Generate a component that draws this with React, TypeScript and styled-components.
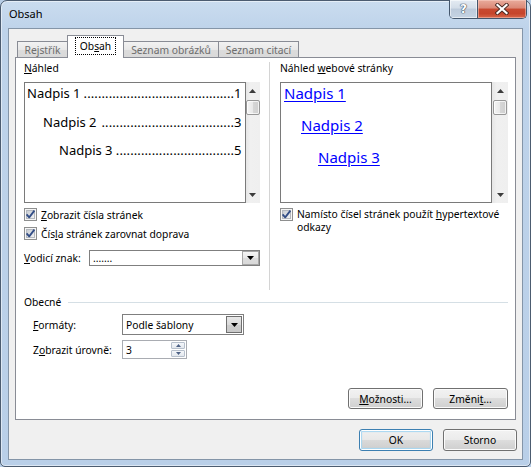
import React from "react";
import styled, { createGlobalStyle, css } from "styled-components";

const UI = `"Segoe UI", "Noto Sans", "Open Sans", sans-serif`;

const GlobalStyle = createGlobalStyle`
  html, body { margin: 0; padding: 0; }
  body {
    width: 531px; height: 467px; overflow: hidden;
    background: #b7cde6;
    font-family: ${UI};
    font-size: 10.3px;
    color: #000;
  }
  * { box-sizing: border-box; }
`;

const Window = styled.div`
  width: 531px;
  height: 467px;
  border: 1px solid #4c5c70;
  border-radius: 7px 7px 5px 5px;
  background: linear-gradient(180deg, #cadcef 0px, #bed3ea 28px, #b9cfe8 100%);
  box-shadow: inset 0 0 0 1px rgba(255, 255, 255, 0.5);
  padding: 0 7px 6px 7px;
  display: flex;
  flex-direction: column;
`;

const TitleBar = styled.div`
  height: 27px;
  display: flex;
  align-items: flex-start;
`;

const Title = styled.div`
  margin: 5px 0 0 1px;
  font-size: 11px;
  line-height: 16px;
  color: #000;
`;

const Caption = styled.div`
  margin: -1px -4px 0 auto;
  display: flex;
  height: 19px;
  border: 1px solid #44566c;
  border-top: none;
  border-radius: 0 0 5px 5px;
  overflow: hidden;
`;

const HelpButton = styled.div`
  width: 28px;
  height: 100%;
  display: flex;
  align-items: center;
  justify-content: center;
  background: linear-gradient(180deg, #e4ebf3 0%, #d3dde8 45%, #bccadb 50%, #c5d3e3 100%);
  box-shadow: inset 0 0 0 1px rgba(255, 255, 255, 0.55);
  border-right: 1px solid #44566c;
  color: #fff;
  font-family: "DejaVu Sans", sans-serif;
  font-weight: bold;
  font-size: 12px;
  text-shadow: 0 0 1px #344455, 0 0 1px #344455, 0 0 1px #344455;
`;

const CloseButton = styled.div`
  width: 48px;
  height: 100%;
  display: flex;
  align-items: center;
  justify-content: center;
  background: linear-gradient(180deg, #e9ab9c 0%, #db8876 45%, #c84a31 50%, #c6452c 75%, #d7664a 100%);
  box-shadow: inset 0 0 0 1px rgba(255, 220, 210, 0.45);
`;

const Client = styled.div`
  flex: 1;
  background: #f0f0f0;
  border: 1px solid #8495a8;
  padding: 6px 6px 0 6px;
  display: flex;
  flex-direction: column;
`;

const TabStrip = styled.div`
  height: 22px;
  display: flex;
  align-items: flex-end;
  padding-left: 2px;
`;

const Tab = styled.div<{ $active?: boolean; $w: number }>`
  width: ${(p) => p.$w}px;
  height: 16px;
  border: 1px solid #898c95;
  border-bottom: none;
  background: linear-gradient(180deg, #f2f2f2 0%, #e8e8e8 50%, #dcdcdc 51%, #d9d9d9 100%);
  color: #6d6d6d;
  font-size: 10.3px;
  display: flex;
  align-items: center;
  justify-content: center;
  & + & {
    margin-left: -1px;
  }
  ${(p) =>
    p.$active &&
    css`
      height: 23px;
      margin-bottom: -1px;
      background: #fff;
      color: #000;
      position: relative;
      z-index: 1;
      padding-bottom: 3px;
    `}
`;

const FocusRect = styled.span`
  outline: 1px dotted #000;
  padding: 1px 4px;
  line-height: 14px;
`;

const Panel = styled.div`
  height: 363px;
  background: #fff;
  border: 1px solid #898c95;
  padding: 3px 7px 10px 8px;
  display: flex;
  flex-direction: column;
`;

const TopSection = styled.div`
  height: 229px;
  display: flex;
`;

const Column = styled.div<{ $w?: number }>`
  display: flex;
  flex-direction: column;
  ${(p) => (p.$w ? `width: ${p.$w}px;` : "flex: 1;")}
`;

const VSep = styled.div`
  width: 1px;
  margin: 1px 10px 0 9px;
  background: #d4d4d4;
`;

const Label = styled.div`
  line-height: 15px;
  height: 15px;
  margin-bottom: 6px;
  white-space: nowrap;
`;

const U = styled.span`
  text-decoration: underline;
  text-underline-offset: 1px;
`;

const PreviewRow = styled.div`
  height: 121px;
  display: flex;
`;

const PreviewBox = styled.div<{ $gap: number }>`
  flex: 1;
  border: 1px solid #7a7a7a;
  background: #fff;
  padding: 0 3px 0 2px;
  display: flex;
  flex-direction: column;
  gap: ${(p) => p.$gap}px;
`;

const TocLine = styled.div<{ $indent: number }>`
  display: flex;
  padding-left: ${(p) => p.$indent}px;
  font-size: 13px;
  line-height: 20px;
  white-space: nowrap;
`;

const TocTitle = styled.span`
  margin-right: 3px;
`;

const Leader = styled.span`
  flex: 1;
  text-align: right;
  letter-spacing: 0.1px;
`;

const WebLink = styled.div<{ $indent: number }>`
  margin-left: ${(p) => p.$indent}px;
  font-size: 15px;
  line-height: 20px;
  color: #0000ff;
  text-decoration: underline;
  text-underline-offset: 2px;
  white-space: nowrap;
  align-self: flex-start;
`;

const Scrollbar = styled.div`
  width: 16px;
  background: linear-gradient(90deg, #e6e6e6 0%, #f0f0f0 30%, #efefef 100%);
  display: flex;
  flex-direction: column;
  align-items: center;
`;

const ScrollArrow = styled.div`
  height: 17px;
  width: 100%;
  display: flex;
  align-items: center;
  justify-content: center;
`;

const Thumb = styled.div`
  width: 14px;
  height: 15px;
  margin-top: 1px;
  border: 1px solid #979797;
  border-radius: 2px;
  background: linear-gradient(90deg, #f4f4f4 0%, #e8e8e8 50%, #d6d6d6 51%, #cfcfcf 100%);
  box-shadow: inset 0 0 0 1px rgba(255, 255, 255, 0.7);
`;

const Fill = styled.div`
  flex: 1;
`;

const CheckRow = styled.div`
  display: flex;
  align-items: flex-start;
  min-height: 19px;
  margin-top: 3px;
  & + & {
    margin-top: 0;
  }
`;

const CheckBoxSvg = styled.svg`
  width: 13px;
  height: 13px;
  flex: none;
  margin-top: 2px;
`;

const CheckText = styled.div<{ $lh?: number }>`
  margin-left: 4px;
  line-height: ${(p) => p.$lh ?? 15}px;
  padding-top: 2px;
`;

const FieldRow = styled.div<{ $mt: number; $h: number; $indent?: number }>`
  display: flex;
  align-items: center;
  height: ${(p) => p.$h}px;
  margin-top: ${(p) => p.$mt}px;
  padding-left: ${(p) => p.$indent ?? 0}px;
`;

const FieldLabel = styled.div<{ $w: number }>`
  width: ${(p) => p.$w}px;
  flex: none;
  white-space: nowrap;
`;

const Combo = styled.div<{ $w: number }>`
  width: ${(p) => p.$w}px;
  height: 100%;
  display: flex;
  border: 1px solid #7f7f7f;
  background: #fff;
`;

const ComboText = styled.div`
  flex: 1;
  padding-left: 3px;
  display: flex;
  align-items: center;
  white-space: nowrap;
`;

const ComboButton = styled.div<{ $hot?: boolean }>`
  width: 17px;
  display: flex;
  align-items: center;
  justify-content: center;
  border: 1px solid #a7a7a7;
  background: linear-gradient(180deg, #f5f5f5 0%, #e9e9e9 50%, #dddddd 51%, #d9d9d9 100%);
  ${(p) =>
    p.$hot &&
    css`
      width: 16px;
      margin: 1px;
      border: 1px solid #6f6f6f;
      background: linear-gradient(180deg, #e8e8e8 0%, #dadada 50%, #cdcdcd 51%, #c9c9c9 100%);
    `}
`;

const Spinner = styled.div`
  width: 65px;
  height: 100%;
  display: flex;
  border: 1px solid #a9acb2;
  background: #fff;
`;

const SpinButtons = styled.div`
  width: 16px;
  display: flex;
  flex-direction: column;
  padding: 1px;
  gap: 1px;
`;

const SpinPart = styled.div`
  flex: 1;
  display: flex;
  align-items: center;
  justify-content: center;
  border: 1px solid #b7c0cc;
  border-radius: 1px;
  background: linear-gradient(180deg, #f5f7fa 0%, #e3e8ee 100%);
`;

const GroupHeader = styled.div`
  display: flex;
  align-items: center;
  margin-top: 5px;
  height: 15px;
  line-height: 15px;
`;

const GroupLine = styled.div`
  flex: 1;
  height: 1px;
  margin-left: 7px;
  background: #d5dfe5;
`;

const ButtonRow = styled.div<{ $mt?: string; $mr?: number }>`
  display: flex;
  justify-content: flex-end;
  gap: 10px;
  margin-top: ${(p) => p.$mt ?? "0"};
  margin-right: ${(p) => p.$mr ?? 0}px;
`;

const Button = styled.div<{ $default?: boolean; $w: number; $h: number }>`
  width: ${(p) => p.$w}px;
  height: ${(p) => p.$h}px;
  border: 1px solid #707070;
  border-radius: 3px;
  background: linear-gradient(180deg, #f2f2f2 0%, #ebebeb 49%, #dddddd 50%, #cfcfcf 100%);
  box-shadow: inset 0 0 0 1px #fbfbfb;
  display: flex;
  align-items: center;
  justify-content: center;
  white-space: nowrap;
  ${(p) =>
    p.$default &&
    css`
      border-color: #3c7fb1;
      background: linear-gradient(180deg, #f0f0f0 0%, #e8e8e8 49%, #dadada 50%, #cdcdcd 100%);
      box-shadow: inset 0 0 0 1px #ffffff, inset 0 0 1px 2px #a6d6f2;
    `}
`;

const ButtonsFooter = styled(ButtonRow)`
  margin-top: 9px;
  height: 22px;
`;

/* ---------- small drawings ---------- */

const Triangle = ({ dir, color = "#000", w = 7, h = 4 }: { dir: "up" | "down"; color?: string; w?: number; h?: number }) => (
  <svg width={w} height={h} viewBox={`0 0 ${w} ${h}`} style={{ display: "block" }}>
    <path d={dir === "up" ? `M0 ${h} L${w / 2} 0 L${w} ${h} Z` : `M0 0 L${w / 2} ${h} L${w} 0 Z`} fill={color} />
  </svg>
);

let cbId = 0;
const CheckBox = () => {
  const id = React.useMemo(() => `cbg${cbId++}`, []);
  return (
    <CheckBoxSvg viewBox="0 0 13 13">
      <defs>
        <linearGradient id={id} x1="0" y1="0" x2="1" y2="1">
          <stop offset="0" stopColor="#c6cbd2" />
          <stop offset="1" stopColor="#f4f4f4" />
        </linearGradient>
      </defs>
      <rect x="0.5" y="0.5" width="12" height="12" fill="#f6f6f6" stroke="#8e8f8f" />
      <rect x="2.5" y="2.5" width="8" height="8" fill={`url(#${id})`} stroke="#b4b8be" />
      <path d="M2.6 6.4 L5.2 9.4 L10.4 2.6" fill="none" stroke="#324d86" strokeWidth="1.8" strokeLinejoin="round" />
    </CheckBoxSvg>
  );
};

const Scroll = () => (
  <Scrollbar>
    <ScrollArrow>
      <Triangle dir="up" color="#3c3c3c" />
    </ScrollArrow>
    <Thumb />
    <Fill />
    <ScrollArrow>
      <Triangle dir="down" color="#3c3c3c" />
    </ScrollArrow>
  </Scrollbar>
);

const CloseX = () => (
  <svg width="14" height="12" viewBox="0 0 14 12">
    <path d="M2.5 2 L11.5 10 M11.5 2 L2.5 10" stroke="#4a2a24" strokeWidth="4" strokeLinecap="square" />
    <path d="M2.5 2 L11.5 10 M11.5 2 L2.5 10" stroke="#ffffff" strokeWidth="2.2" strokeLinecap="square" />
  </svg>
);

const tocLines = [
  { title: "Nadpis 1", page: "1", indent: 0, dots: 42 },
  { title: "Nadpis 2", page: "3", indent: 16, dots: 37 },
  { title: "Nadpis 3", page: "5", indent: 32, dots: 33 },
];

export default function App() {
  return (
    <>
      <GlobalStyle />
      <Window>
        <TitleBar>
          <Title>Obsah</Title>
          <Caption>
            <HelpButton>?</HelpButton>
            <CloseButton>
              <CloseX />
            </CloseButton>
          </Caption>
        </TitleBar>
        <Client>
          <TabStrip>
            <Tab $w={51}>Rejstřík</Tab>
            <Tab $w={57} $active>
              <FocusRect>
                Ob<U>s</U>ah
              </FocusRect>
            </Tab>
            <Tab $w={96}>Seznam obrázků</Tab>
            <Tab $w={81}>Seznam citací</Tab>
          </TabStrip>
          <Panel>
            <TopSection>
              <Column $w={236}>
                <Label>
                  <U>N</U>áhled
                </Label>
                <PreviewRow>
                  <PreviewBox $gap={8.5}>
                    {tocLines.map((l) => (
                      <TocLine key={l.title} $indent={l.indent}>
                        <TocTitle>{l.title}</TocTitle>
                        <Leader>{".".repeat(l.dots)}</Leader>
                        <span>{l.page}</span>
                      </TocLine>
                    ))}
                  </PreviewBox>
                  <Scroll />
                </PreviewRow>
                <CheckRow>
                  <CheckBox />
                  <CheckText>
                    <U>Z</U>obrazit čísla stránek
                  </CheckText>
                </CheckRow>
                <CheckRow>
                  <CheckBox />
                  <CheckText>
                    Čís<U>l</U>a stránek zarovnat doprava
                  </CheckText>
                </CheckRow>
                <FieldRow $mt={6} $h={16}>
                  <FieldLabel $w={65}>
                    <U>V</U>odicí znak:
                  </FieldLabel>
                  <Combo $w={171}>
                    <ComboText>.......</ComboText>
                    <ComboButton>
                      <Triangle dir="down" />
                    </ComboButton>
                  </Combo>
                </FieldRow>
              </Column>
              <VSep />
              <Column>
                <Label>
                  Náhled <U>w</U>ebové stránky
                </Label>
                <PreviewRow>
                  <PreviewBox $gap={12}>
                    <WebLink $indent={1}>Nadpis 1</WebLink>
                    <WebLink $indent={18}>Nadpis 2</WebLink>
                    <WebLink $indent={35}>Nadpis 3</WebLink>
                  </PreviewBox>
                  <Scroll />
                </PreviewRow>
                <CheckRow>
                  <CheckBox />
                  <CheckText $lh={13}>
                    Namísto čísel stránek použít <U>h</U>ypertextové
                    <br />
                    odkazy
                  </CheckText>
                </CheckRow>
              </Column>
            </TopSection>
            <GroupHeader>
              Obecné
              <GroupLine />
            </GroupHeader>
            <FieldRow $mt={4} $h={21} $indent={9}>
              <FieldLabel $w={89}>
                <U>F</U>ormáty:
              </FieldLabel>
              <Combo $w={122}>
                <ComboText>Podle šablony</ComboText>
                <ComboButton $hot>
                  <Triangle dir="down" />
                </ComboButton>
              </Combo>
            </FieldRow>
            <FieldRow $mt={5} $h={19} $indent={9}>
              <FieldLabel $w={89}>
                Z<U>o</U>brazit úrovně:
              </FieldLabel>
              <Spinner>
                <ComboText>3</ComboText>
                <SpinButtons>
                  <SpinPart>
                    <Triangle dir="up" color="#4d6185" w={5} h={3} />
                  </SpinPart>
                  <SpinPart>
                    <Triangle dir="down" color="#4d6185" w={5} h={3} />
                  </SpinPart>
                </SpinButtons>
              </Spinner>
            </FieldRow>
            <ButtonRow $mt="auto">
              <Button $w={75} $h={21}>
                <U>M</U>ožnosti...
              </Button>
              <Button $w={75} $h={21}>
                Změni<U>t</U>...
              </Button>
            </ButtonRow>
          </Panel>
          <ButtonsFooter $mr={-1}>
            <Button $w={74} $h={22} $default>
              OK
            </Button>
            <Button $w={74} $h={22}>
              Storno
            </Button>
          </ButtonsFooter>
        </Client>
      </Window>
    </>
  );
}
